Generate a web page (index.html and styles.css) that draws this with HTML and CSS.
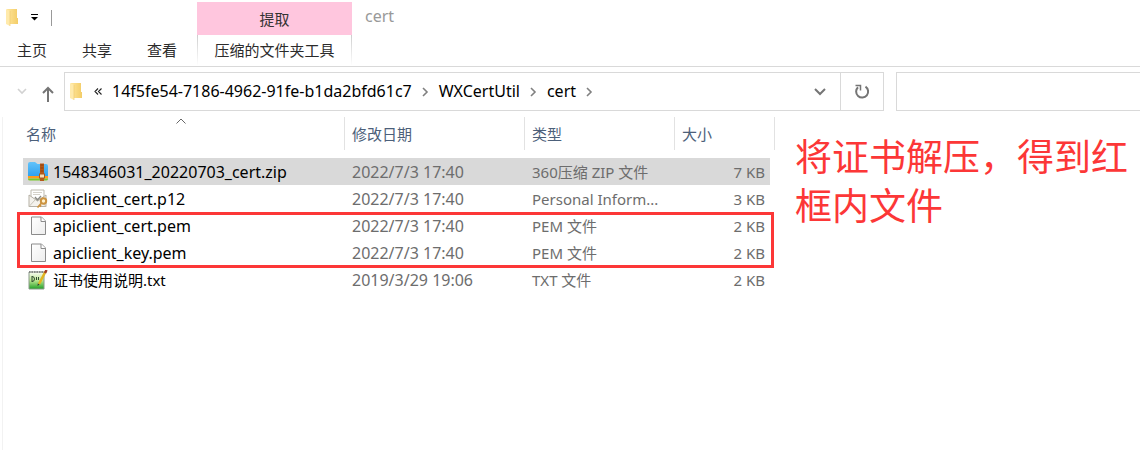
FILE: index.html
```html
<!DOCTYPE html>
<html lang="zh-CN">
<head>
    <meta charset="UTF-8">
    <meta name="viewport" content="width=device-width, initial-scale=1.0">
    <title>cert</title>
    <link rel="stylesheet" href="styles.css">
</head>
<body>
    <!-- shared icons -->
    <svg class="icon-defs" width="0" height="0" aria-hidden="true">
        <defs>
            <linearGradient id="folderFill" x1="0" x2="1"><stop offset="0" stop-color="#ffe59a"/><stop offset="1" stop-color="#f3cd68"/></linearGradient>
            <linearGradient id="pageFill" x1="0" y1="0" x2="1" y2="1"><stop offset="0" stop-color="#fff"/><stop offset="1" stop-color="#ededed"/></linearGradient>
            <linearGradient id="zipFill" x1="0" y1="0" x2="0" y2="1"><stop offset="0" stop-color="#62c3fa"/><stop offset="1" stop-color="#2c9eee"/></linearGradient>
            <linearGradient id="txtFill" x1="0" y1="0" x2="0" y2="1"><stop offset="0" stop-color="#fbfdf6"/><stop offset=".5" stop-color="#b9e58f"/><stop offset="1" stop-color="#1fa025"/></linearGradient>
            <symbol id="folder" viewBox="0 0 12 17">
                <path d="M1 0h10v9h1v6H1z" fill="url(#folderFill)"/>
                <path d="M0 0l4 2v15l-4-2z" fill="#ffeaab"/>
                <path d="M4 2v15" stroke="#ecc768" stroke-width=".6"/>
            </symbol>
            <symbol id="page" viewBox="0 0 20 20">
                <path d="M3.500 1h10l4 4v13.500h-14z" fill="url(#pageFill)" stroke="#8b8b8b"/>
                <path d="M13 1v4.500h4.500" fill="#fff" stroke="#8b8b8b"/>
            </symbol>
            <symbol id="chevron" viewBox="0 0 7 10"><path d="M1 1l4 4-4 4" fill="none" stroke="#808080" stroke-width="1.6"/></symbol>
        </defs>
    </svg>

    <header class="ribbon">
        <div class="ribbon-main">
            <div class="quick-access">
                <svg class="folder-icon"><use href="#folder"/></svg>
                <button class="quick-menu" aria-label="自定义快速访问工具栏">
                    <svg width="7" height="7" viewBox="0 0 7 7"><path d="M0 .5h7" stroke="#000"/><path d="M0 3h7L3.500 6.500z"/></svg>
                </button>
            </div>
            <nav class="tabs">
                <button class="tab">主页</button>
                <button class="tab">共享</button>
                <button class="tab">查看</button>
            </nav>
        </div>
        <div class="context-group">
            <div class="context-title">提取</div>
            <button class="tab context-tab">压缩的文件夹工具</button>
        </div>
        <div class="window-title">cert</div>
    </header>

    <div class="toolbar">
        <button class="nav-button history" aria-label="最近浏览的位置">
            <svg width="10" height="7" viewBox="0 0 10 7"><path d="M1 1l4 4 4-4" fill="none" stroke="#d2d2d2" stroke-width="1.6"/></svg>
        </button>
        <button class="nav-button up" aria-label="向上">
            <svg width="12" height="16" viewBox="0 0 12 16"><path d="M6 16V2M1 7l5-5 5 5" fill="none" stroke="#757575" stroke-width="2"/></svg>
        </button>
        <div class="address">
            <svg class="folder-icon"><use href="#folder"/></svg>
            <button class="overflow" aria-label="更多">
                <svg width="8" height="8" viewBox="0 0 8 8"><path d="M4 .5L1 3.500l3 3M7.500 .5l-3 3 3 3" fill="none" stroke="#222" stroke-width="1.1"/></svg>
            </button>
            <button class="crumb">14f5fe54-7186-4962-91fe-b1da2bfd61c7</button>
            <svg class="chevron"><use href="#chevron"/></svg>
            <button class="crumb">WXCertUtil</button>
            <svg class="chevron"><use href="#chevron"/></svg>
            <button class="crumb">cert</button>
            <svg class="chevron"><use href="#chevron"/></svg>
            <button class="address-menu" aria-label="以前的位置">
                <svg width="12" height="8" viewBox="0 0 12 8"><path d="M1 1l5 5 5-5" fill="none" stroke="#757575" stroke-width="2"/></svg>
            </button>
            <button class="refresh" aria-label="刷新">
                <svg width="16" height="16" viewBox="0 0 16 16"><path d="M11.500 2.600a6 6 0 1 1-7.500 .6" fill="none" stroke="#757575" stroke-width="2"/><path d="M1.500 1.500H6.500V6.500" fill="none" stroke="#757575" stroke-width="1.5"/></svg>
            </button>
        </div>
        <input class="search" type="text" aria-label="搜索">
    </div>

    <main class="content">
        <div class="file-list">
            <table class="files">
                <colgroup>
                    <col class="col-name">
                    <col class="col-date">
                    <col class="col-type">
                    <col class="col-size">
                </colgroup>
                <thead>
                    <tr>
                        <th>
                            <button class="sort">名称</button>
                            <svg class="sort-mark" width="10" height="6" viewBox="0 0 10 6"><path d="M.5 5.500L5 1l4.500 4.500" fill="none" stroke="#666"/></svg>
                        </th>
                        <th><button class="sort">修改日期</button></th>
                        <th><button class="sort">类型</button></th>
                        <th><button class="sort">大小</button></th>
                    </tr>
                </thead>
                <tbody>
                    <tr class="selected">
                        <td>
                            <div class="file-name">
                                <svg class="file-icon" viewBox="0 0 20 20">
                                    <path d="M0 2q0-2 2-2h5l2.500 2H18q2 0 2 2v11H0z" fill="url(#zipFill)"/>
                                    <path d="M0 14h20v2.500H0z" fill="#ff9b1a"/>
                                    <path d="M0 16.500h20v.5q0 1.500-2 1.500H2q-2 0-2-1.500z" fill="#7bc72a"/>
                                    <path d="M12 1.500h4V19h-4z" fill="#b4591a"/>
                                    <path d="M12.500 3h3M12.500 6h3M12.500 9h3" stroke="#8e430f"/>
                                    <rect x="11.500" y="12" width="5" height="4" fill="#f6ddb2" stroke="#a8591f"/>
                                </svg>
                                1548346031_20220703_cert.zip
                            </div>
                        </td>
                        <td>2022/7/3 17:40</td>
                        <td>360压缩 ZIP 文件</td>
                        <td>7 KB</td>
                    </tr>
                    <tr>
                        <td>
                            <div class="file-name">
                                <svg class="file-icon" viewBox="0 0 20 20">
                                    <path d="M3 1h13v9H3z" fill="#fff" stroke="#bdb9ae"/>
                                    <path d="M5 3.500h9M5 5.500h7" stroke="#d5d2ca"/>
                                    <path d="M1 6l8.500 6L18 6v11.500H1z" fill="#f4f2ed" stroke="#b5b0a5"/>
                                    <path d="M1 17.500l6.500-7M18 17.500l-6-7" stroke="#c9c5bb"/>
                                    <path d="M7 8l2.500 3L13 7" fill="none" stroke="#8a8a84" stroke-width="1.3"/>
                                    <circle cx="15.500" cy="12" r="2.700" fill="#fff2d0" stroke="#cc9340" stroke-width="2"/>
                                    <path d="M13.500 14l-4 4.500M11.500 16l1.500 1.500" stroke="#cc9340" stroke-width="1.8"/>
                                </svg>
                                apiclient_cert.p12
                            </div>
                        </td>
                        <td>2022/7/3 17:40</td>
                        <td>Personal Inform...</td>
                        <td>3 KB</td>
                    </tr>
                    <tr>
                        <td><div class="file-name"><svg class="file-icon"><use href="#page"/></svg>apiclient_cert.pem</div></td>
                        <td>2022/7/3 17:40</td>
                        <td>PEM 文件</td>
                        <td>2 KB</td>
                    </tr>
                    <tr>
                        <td><div class="file-name"><svg class="file-icon"><use href="#page"/></svg>apiclient_key.pem</div></td>
                        <td>2022/7/3 17:40</td>
                        <td>PEM 文件</td>
                        <td>2 KB</td>
                    </tr>
                    <tr>
                        <td>
                            <div class="file-name file-name-cn">
                                <svg class="file-icon" viewBox="0 0 20 20">
                                    <path d="M1 2h15v17H1z" fill="url(#txtFill)" stroke="#8b9a8b"/>
                                    <path d="M1 2h15" stroke="#777" stroke-width="1.500" stroke-dasharray="1.500 1"/>
                                    <path d="M4 6v6M4 6.500q2.500 0 2.500 2.500t-2.500 2.500M8.500 7v3M10.500 7v3" fill="none" stroke="#2f4a2f"/>
                                    <path d="M17.500 1.500L11 14" stroke="#e3b41e" stroke-width="2.500"/>
                                    <path d="M18.500 0L17 3" stroke="#a33d26" stroke-width="2.500"/>
                                    <path d="M11.500 14.500L9.500 16l.3-2.500z" fill="#333"/>
                                </svg>
                                证书使用说明.txt
                            </div>
                        </td>
                        <td>2019/3/29 19:06</td>
                        <td>TXT 文件</td>
                        <td>2 KB</td>
                    </tr>
                </tbody>
            </table>
            <div class="highlight"></div>
        </div>
        <p class="note">将证书解压，得到红框内文件</p>
    </main>
</body>
</html>
```
FILE: styles.css
```css
* {
    box-sizing: border-box;
}

body {
    margin: 0;
    min-height: 100vh;
    display: flex;
    flex-direction: column;
    background-color: #fff;
    color: #000;
    font-family: "Noto Sans", "Noto Sans CJK SC", sans-serif;
    font-size: 15px;
    line-height: 20px;
}

button {
    padding: 0;
    border: none;
    background: none;
    color: inherit;
    font: inherit;
    cursor: pointer;
}

svg {
    display: block;
    flex: none;
}

.icon-defs {
    position: absolute;
}

.folder-icon {
    width: 12px;
    height: 17px;
}

/* ribbon */
.ribbon {
    display: flex;
    height: 67px;
    border-bottom: 1px solid #d9d9d9;
}

.ribbon-main {
    width: 197px;
}

.quick-access {
    display: flex;
    align-items: center;
    height: 35px;
    padding-left: 6px;
}

.quick-menu {
    display: flex;
    align-items: center;
    height: 16px;
    margin-left: 13px;
    padding-right: 13px;
    border-right: 1px solid #999;
}

.tabs {
    display: flex;
    gap: 1px;
}

.tab {
    height: 30px;
    padding: 0 17px;
    color: #2b2b2b;
}

.context-group {
    display: flex;
    flex-direction: column;
    width: 155px;
    padding-top: 2px;
}

.context-title {
    height: 33px;
    background-color: #ffc6de;
    color: #333;
    line-height: 34px;
    text-align: center;
}

.context-tab {
    padding: 0;
    border: 1px solid;
    border-width: 0 1px;
    border-image: linear-gradient(#ccc, #fff) 1;
    height: 30px;
}

.window-title {
    padding: 6px 13px;
    color: #999;
    font-size: 16px;
}

/* address bar */
.toolbar {
    display: flex;
    align-items: center;
    padding: 5px 0 6px;
}

.nav-button {
    display: flex;
    align-items: center;
    height: 39px;
}

.history {
    padding: 0 8px 0 17px;
}

.up {
    padding: 4px 10px 0 7px;
}

.address {
    display: flex;
    flex: 1;
    align-items: center;
    height: 39px;
    padding-left: 5px;
    border: 1px solid #d9d9d9;
}

.overflow {
    margin: 0 10px 0 12px;
}

.crumb {
    padding-bottom: 2px;
    font-size: 16px;
}

.chevron {
    width: 7px;
    height: 10px;
    margin: 0 10px;
}

.address-menu {
    margin-left: auto;
    padding: 0 14px;
}

.refresh {
    display: flex;
    align-items: center;
    height: 37px;
    padding: 0 13px;
    border-left: 1px solid #d9d9d9;
}

.search {
    width: 244px;
    height: 39px;
    margin-left: 12px;
    border: 1px solid #d9d9d9;
    border-right: none;
    font: inherit;
}

/* file list */
.content {
    display: flex;
    flex: 1;
    margin-left: 2px;
    border-left: 1px solid #f2f2f2;
}

.file-list {
    position: relative;
    padding-left: 20px;
}

.files {
    width: 752px;
    table-layout: fixed;
    border-spacing: 0;
    color: #6d6d6d;
}

.col-name {
    width: 322px;
}

.col-date {
    width: 180px;
}

.col-type {
    width: 150px;
}

.col-size {
    width: 100px;
}

.files th {
    position: relative;
    height: 41px;
    padding: 0;
    vertical-align: top;
    font-weight: normal;
}

.sort {
    display: block;
    width: 100%;
    height: 33px;
    padding-left: 7px;
    border-right: 1px solid #e2e2e2;
    color: #4c607a;
    text-align: left;
}

th:first-child .sort {
    padding-left: 3px;
}

.sort-mark {
    position: absolute;
    top: 1px;
    left: 153px;
}

.files td {
    height: 27px;
    padding: 0 7px;
    white-space: nowrap;
}

.files td:first-child {
    padding-left: 5px;
    color: #000;
}

.files td:nth-child(2) {
    font-size: 16px;
}

.files td:last-child {
    padding-right: 5px;
    border-right: 5px solid #fff;
    text-align: right;
}

.selected {
    background-color: #d9d9d9;
}

.file-name {
    display: flex;
    align-items: center;
    gap: 5px;
    font-size: 16px;
}

.file-name-cn {
    font-size: 15px;
}

.file-icon {
    width: 20px;
    height: 20px;
}

/* red frame around the two pem files */
.highlight {
    position: absolute;
    top: 95px;
    left: 14px;
    width: 757px;
    height: 56px;
    border: 3px solid #fc3737;
    pointer-events: none;
}

.note {
    flex: 1;
    margin: 14px 0 0 20px;
    color: #fc3737;
    font-family: "Noto Sans CJK SC", sans-serif;
    font-size: 37px;
    line-height: 49px;
}
```
